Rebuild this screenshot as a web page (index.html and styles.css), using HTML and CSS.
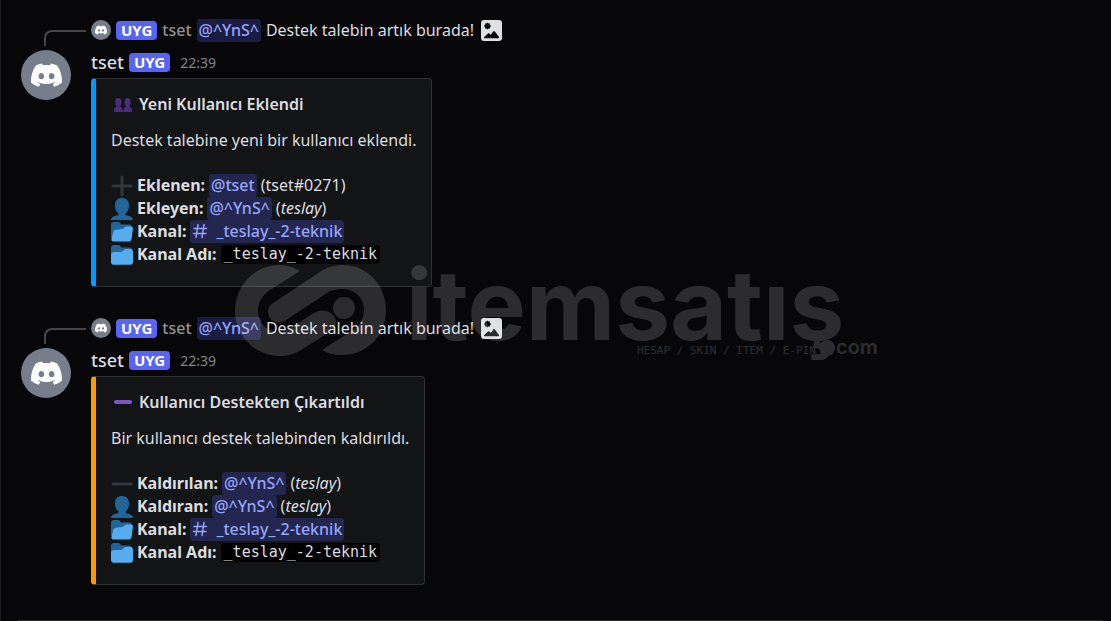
FILE: index.html
```
<!DOCTYPE html>
<html lang="tr">
<head>
  <meta charset="utf-8">
  <title>Destek Talebi</title>
  <link rel="stylesheet" href="styles.css">
</head>
<body>
  <svg class="defs" width="0" height="0" aria-hidden="true">
    <symbol id="logo" viewBox="0 0 32 24">
      <path d="M27 2.200C25 1.200 22.900.4 20.600 0l-1 1.900c-2.400-.3-4.800-.3-7.200 0L11.400 0C9.100.4 7 1.200 5 2.200 1 8.200-.3 14 .1 19.900 2.600 21.900 5.200 23.200 8 24l1.700-2.800-2.700-1.300.7-.5c5.300 2.400 11.300 2.400 16.600 0l.7.5-2.700 1.300L24 24c2.800-.8 5.400-2.100 7.900-4.100.4-5.900-.9-11.700-4.900-17.700ZM10.700 16.400c-1.600 0-2.900-1.500-2.900-3.200s1.300-3.200 2.900-3.200 2.900 1.500 2.900 3.200-1.300 3.200-2.900 3.200Zm10.600 0c-1.600 0-2.900-1.500-2.900-3.200s1.300-3.200 2.900-3.200 2.900 1.500 2.900 3.200-1.300 3.200-2.900 3.200Z"/>
    </symbol>
    <symbol id="image" viewBox="0 0 21 21">
      <path fill="#dfe0e2" fill-rule="evenodd" d="M3 0h15a3 3 0 0 1 3 3v15a3 3 0 0 1-3 3H3a3 3 0 0 1-3-3V3a3 3 0 0 1 3-3ZM6.500 2.500l-1 1H4V5L3 6l1 1.200v1.400h1.500l1 1 1.100-1H9V7.200L10 6 9 5V3.500H7.600ZM3 17.200c0 .7.400 1 1 1h13c1 0 1.300-.7.800-1.500l-3.900-5.200c-.5-.7-1.200-.7-1.700 0l-2.400 3.200-1.700-1.200c-.5-.4-1-.3-1.400.2Z"/>
    </symbol>
    <symbol id="users" viewBox="0 0 18 15">
      <g fill="#4a2d7c">
        <path d="M9.500 15v-2c0-1.800 1.100-2.900 2.700-3.500-1.200-1-1.700-2.700-1.700-4.800C10.500 2 11.500 1 13.500 1s3.200 1 3.200 3.700c0 2.100-.4 3.800-1.500 4.800 1.500.5 2.800 1.500 2.800 3.500v2Z"/>
        <path d="M0 15v-2c0-2 1.300-3 2.800-3.500C1.700 8.500 1.200 6.800 1.200 4.700 1.200 2 2.400 1 4.400 1s3.200 1 3.200 3.700c0 2.100-.6 3.800-1.800 4.800C7.500 10 8.800 11 8.800 13v2Z"/>
      </g>
    </symbol>
    <symbol id="person" viewBox="0 0 22 22">
      <path fill="#226699" d="M11 0c4.500 0 7 2.500 7 7.500 0 3.500-1.200 6.300-3.300 7.800v1.900c4.300.5 7.300 2 7.300 4.800H0c0-2.800 3-4.300 7.300-4.800v-1.900C5.200 13.800 4 11 4 7.500 4 2.500 6.500 0 11 0Z"/>
    </symbol>
    <symbol id="folder-open" viewBox="0 0 22 22">
      <path fill="#226699" d="M0 4a3 3 0 0 1 3-3h4c2 0 2.500 1 3 2.500h8a3 3 0 0 1 3 3V17H0Z"/>
      <path fill="#55acee" d="M2 12c.3-2 1-3 3-3.200L11 8c2-.3 2.500-2.500 5-2.500h4c1.500 0 2 .7 2 2L20.500 18c-.2 1.500-1 2.500-2.500 2.500H2.500C1 20.500 0 19.500 .5 18Z"/>
    </symbol>
    <symbol id="folder" viewBox="0 0 22 22">
      <path fill="#226699" d="M0 4a3 3 0 0 1 3-3h4c2 0 2.500 1 3 2.500h8a3 3 0 0 1 3 3V17H0Z"/>
      <path fill="#55acee" d="M0 11c0-2 1-3 3-3h7c2 0 2.500-3 5-3h4.500C21 5 22 6 22 7.500V18c0 1.500-1 2.700-2.500 2.700h-17C1 20.700 0 19.500 0 18Z"/>
    </symbol>
    <symbol id="hash" viewBox="0 0 16 16">
      <path fill="none" stroke="currentColor" stroke-width="1.500" stroke-linecap="round" d="M6 1.500 4 14.500M12 1.500l-2 13M2 5.500h12.500M1.500 10.500H14"/>
    </symbol>
  </svg>

  <main class="chat">
    <article class="message">
      <div class="reply">
        <span class="spine"></span>
        <span class="avatar avatar-small"><svg><use href="#logo"/></svg></span>
        <span class="badge">UYG</span>
        <span class="reply-name">tset</span>
        <a class="mention" href="#">@^YnS^</a>
        <span class="reply-text">Destek talebin artık burada!</span>
        <svg class="reply-image"><use href="#image"/></svg>
      </div>
      <span class="avatar"><svg><use href="#logo"/></svg></span>
      <div class="content">
        <header class="message-head">
          <span class="name">tset</span>
          <span class="badge">UYG</span>
          <time>22:39</time>
        </header>
        <section class="embed embed-blue">
          <h2><svg class="title-icon"><use href="#users"/></svg>Yeni Kullanıcı Eklendi</h2>
          <p>Destek talebine yeni bir kullanıcı eklendi.</p>
          <ul>
            <li><svg class="emoji" viewBox="0 0 22 22"><path class="sign" d="M11 2v18M2 11h18"/></svg><b>Eklenen:</b> <a class="mention" href="#">@tset</a> <span>(tset#0271)</span></li>
            <li><svg class="emoji"><use href="#person"/></svg><b>Ekleyen:</b> <a class="mention" href="#">@^YnS^</a> <span>(<i>teslay</i>)</span></li>
            <li><svg class="emoji"><use href="#folder-open"/></svg><b>Kanal:</b> <a class="mention" href="#"><svg class="hash"><use href="#hash"/></svg>_teslay_-2-teknik</a></li>
            <li><svg class="emoji"><use href="#folder"/></svg><b>Kanal Adı:</b> <code>_teslay_-2-teknik</code></li>
          </ul>
        </section>
      </div>
    </article>

    <article class="message">
      <div class="reply">
        <span class="spine"></span>
        <span class="avatar avatar-small"><svg><use href="#logo"/></svg></span>
        <span class="badge">UYG</span>
        <span class="reply-name">tset</span>
        <a class="mention" href="#">@^YnS^</a>
        <span class="reply-text">Destek talebin artık burada!</span>
        <svg class="reply-image"><use href="#image"/></svg>
      </div>
      <span class="avatar"><svg><use href="#logo"/></svg></span>
      <div class="content">
        <header class="message-head">
          <span class="name">tset</span>
          <span class="badge">UYG</span>
          <time>22:39</time>
        </header>
        <section class="embed embed-orange">
          <h2><svg class="title-icon" viewBox="0 0 18 15"><path class="minus" d="M2 7h14"/></svg>Kullanıcı Destekten Çıkartıldı</h2>
          <p>Bir kullanıcı destek talebinden kaldırıldı.</p>
          <ul>
            <li><svg class="emoji" viewBox="0 0 22 22"><path class="sign" d="M2 11h18"/></svg><b>Kaldırılan:</b> <a class="mention" href="#">@^YnS^</a> <span>(<i>teslay</i>)</span></li>
            <li><svg class="emoji"><use href="#person"/></svg><b>Kaldıran:</b> <a class="mention" href="#">@^YnS^</a> <span>(<i>teslay</i>)</span></li>
            <li><svg class="emoji"><use href="#folder-open"/></svg><b>Kanal:</b> <a class="mention" href="#"><svg class="hash"><use href="#hash"/></svg>_teslay_-2-teknik</a></li>
            <li><svg class="emoji"><use href="#folder"/></svg><b>Kanal Adı:</b> <code>_teslay_-2-teknik</code></li>
          </ul>
        </section>
      </div>
    </article>
  </main>
  <div class="composer-edge"></div>

  <!-- site watermark, lies over the chat -->
  <svg class="watermark" viewBox="0 0 644 96">
    <path d="M65 7C58 3 52 1 45 1 20 1 0 21 0 47c0 25 20 45 45 45 8 0 14-2 21-6l30-19c7-5 6-13 1-17-5-4-11-5-18-1L55 64c-5 3-8 4-10 4-13 0-22-9-22-21 0-10 5-16 12-21Z"/>
    <path d="M38 39 88 6c7-4 14-5 20-5 24 0 43 20 43 45 0 26-19 45-44 45-8 0-15-2-20-5l31-20c7-5 11-12 11-20 0-12-9-21-21-21-7 0-12 1-16 4L51 56c-6 4-13 3-16-2-4-6-2-12 3-15Z"/>
    <circle cx="109" cy="44" r="11"/>
    <text class="wm-name" x="171" y="76">itemsatış</text>
    <text class="wm-tag" x="402" y="90">HESAP / SKIN / ITEM / E-PIN</text>
    <circle cx="592" cy="84" r="8"/>
    <text class="wm-com" x="601" y="90">com</text>
  </svg>
</body>
</html>
```
FILE: styles.css
```
* {
  box-sizing: border-box;
}

body {
  margin: 0;
  min-height: 100vh;
  display: flex;
  flex-direction: column;
  background: #070709;
  border-left: 1px solid #1e1f22;
  color: #dcdde0;
  font: 16px/23px "Noto Sans", sans-serif;
}

.defs {
  position: absolute;
}

a {
  color: inherit;
  text-decoration: none;
}

.chat {
  flex: 1;
  display: flex;
  flex-direction: column;
  gap: 25px;
  padding: 14px 20px 0;
}

.message {
  display: grid;
  grid-template-columns: 50px 1fr;
  column-gap: 20px;
  row-gap: 4px;
}

.reply {
  grid-column: 1 / 3;
  display: flex;
  align-items: center;
  gap: 5px;
  height: 32px;
}

.spine {
  align-self: flex-end;
  width: 42px;
  height: 16px;
  margin-left: 23px;
  border-left: 2px solid #46474c;
  border-top: 2px solid #46474c;
  border-top-left-radius: 8px;
}

.avatar {
  display: flex;
  align-items: center;
  justify-content: center;
  width: 50px;
  height: 50px;
  border-radius: 50%;
  background: #757e8a;
  fill: #fff;
}

.avatar svg {
  width: 31px;
  height: 24px;
}

.avatar-small {
  width: 20px;
  height: 20px;
}

.avatar-small svg {
  width: 12px;
  height: 10px;
}

.badge {
  padding: 0 5px;
  border-radius: 4px;
  background: #5865f2;
  color: #fff;
  font-size: 15px;
  font-weight: 700;
  line-height: 19px;
}

.reply-name {
  color: #909196;
  font-weight: 500;
}

.mention {
  padding: 0 2px;
  border-radius: 3px;
  background: #23264e;
  color: #97a5fb;
  font-weight: 500;
}

.reply .mention {
  background: #1a1c43;
}

.reply-image {
  width: 21px;
  height: 21px;
  margin-left: 2px;
}

.message-head {
  display: flex;
  align-items: center;
  gap: 5px;
  height: 24px;
  margin-bottom: 4px;
}

.name {
  font-size: 18px;
  font-weight: 500;
}

time {
  margin-left: 5px;
  color: #83848a;
  font-size: 14px;
}

.embed {
  width: fit-content;
  padding: 14px 15px 20px;
  border: 1px solid #303135;
  border-left: 5px solid;
  border-radius: 4px;
  background: #131416;
}

.embed-blue {
  border-left-color: #0099ff;
}

.embed-orange {
  border-left-color: #ff9900;
}

.embed h2 {
  display: flex;
  align-items: center;
  gap: 7px;
  margin: 0 0 13px;
  padding-left: 3px;
  font-size: 16px;
  font-weight: 600;
}

.embed p {
  margin: 0 0 22px;
}

.embed ul {
  margin: 0;
  padding: 0;
  list-style: none;
}

.embed li {
  display: flex;
  align-items: center;
  gap: 4px;
}

.title-icon {
  width: 18px;
  height: 15px;
}

.minus {
  stroke: #7a55c7;
  stroke-width: 4;
  stroke-linecap: round;
}

.emoji {
  width: 22px;
  height: 22px;
}

.sign {
  stroke: #31373d;
  stroke-width: 3;
  stroke-linecap: round;
}

.hash {
  width: 16px;
  height: 16px;
  margin-right: 8px;
  vertical-align: -2px;
}

code {
  padding: 0 3px;
  border-radius: 4px;
  background: #000;
  font: 15px/19px "DejaVu Sans Mono", monospace;
}

.composer-edge {
  height: 1px;
  margin: 0 8px 0 17px;
  background: #28282d;
}

.watermark {
  position: absolute;
  left: 235px;
  top: 264px;
  width: 644px;
  height: 96px;
  overflow: visible;
  fill: #fff;
  opacity: 0.15;
  pointer-events: none;
}

.wm-name {
  font: 700 98px Inter, sans-serif;
}

.wm-tag {
  font: 11px "DejaVu Sans Mono", monospace;
}

.wm-com {
  font: 600 20px Inter, sans-serif;
}
```
